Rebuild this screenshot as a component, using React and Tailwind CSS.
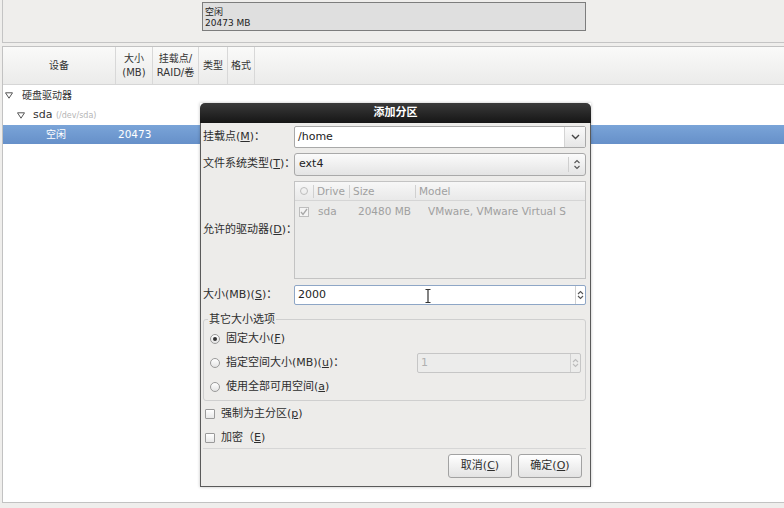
import React from "react";

const font = { fontFamily: '"DejaVu Sans", "Noto Sans CJK SC", sans-serif' };

const U = ({ children }) => <span className="underline underline-offset-1">{children}</span>;

const Tri = () => (
  <svg width="8" height="7" viewBox="0 0 8 7" className="shrink-0">
    <path d="M0.5 0.8 L7.5 0.8 L4 6.2 Z" fill="none" stroke="#555" strokeWidth="1" />
  </svg>
);

const Radio = ({ on }) => (
  <span className="w-[10px] h-[10px] rounded-full border border-[#9a9a9a] bg-gradient-to-b from-white to-[#e4e4e4] flex items-center justify-center shrink-0">
    {on && <span className="w-[4px] h-[4px] rounded-full bg-[#333]" />}
  </span>
);

const Check = () => (
  <span className="w-[10px] h-[10px] border border-[#9a9a9a] bg-gradient-to-b from-white to-[#e8e8e8] rounded-[1px] shrink-0" />
);

const Spin = ({ dim }) => (
  <div className="flex flex-col items-center justify-center w-[10px] border-l border-[#d0d0d0] h-full">
    <svg width="7" height="5" viewBox="0 0 7 5">
      <path d="M1 4 L3.5 1.5 L6 4" fill="none" stroke={dim ? "#bbb" : "#555"} strokeWidth="1.1" />
    </svg>
    <svg width="7" height="5" viewBox="0 0 7 5">
      <path d="M1 1 L3.5 3.5 L6 1" fill="none" stroke={dim ? "#bbb" : "#555"} strokeWidth="1.1" />
    </svg>
  </div>
);

const Label = ({ children }) => (
  <div className="text-[11px] text-[#2e2e2e] pl-[2px] flex items-center whitespace-nowrap">
    <span>{children}</span>
  </div>
);

function Dialog() {
  return (
    <div className="absolute left-[200px] top-[103px] w-[391px] h-[384px] flex flex-col shadow-[0_0_3px_rgba(0,0,0,0.25)]">
      <div className="h-[20px] shrink-0 rounded-t-[5px] bg-gradient-to-b from-[#3a3a3a] to-[#161616] text-white text-[11px] font-bold flex items-center justify-center">
        添加分区
      </div>
      <div className="flex-1 bg-[#edecea] border border-t-0 border-[#5a5a5a] pr-[4px] flex flex-col">
        <div className="grid grid-cols-[93px_1fr] mt-[3px]">
          <Label>
            挂载点(<U>M</U>)：
          </Label>
          <div className="h-[22px] bg-white border border-[#a9a9a9] rounded-[2px] flex items-center">
            <span className="flex-1 pl-[3px] text-[11px] text-[#222]">/home</span>
            <div className="w-[21px] h-full border-l border-[#d4d4d4] bg-gradient-to-b from-[#fafafa] to-[#e6e6e6] flex items-center justify-center">
              <svg width="9" height="6" viewBox="0 0 9 6">
                <path d="M1 1 L4.5 4.5 L8 1" fill="none" stroke="#444" strokeWidth="1.4" />
              </svg>
            </div>
          </div>
        </div>

        <div className="grid grid-cols-[93px_1fr] mt-[5px]">
          <Label>
            文件系统类型(<U>T</U>)：
          </Label>
          <div className="h-[23px] border border-[#a9a9a9] rounded-[3px] bg-gradient-to-b from-[#fbfbfb] to-[#e4e4e4] flex items-center">
            <span className="flex-1 pl-[4px] text-[11px] text-[#222]">ext4</span>
            <div className="w-[17px] h-[15px] border-l border-[#cfcfcf] flex items-center justify-center">
              <svg width="8" height="11" viewBox="0 0 8 11">
                <path d="M1.5 4 L4 1.5 L6.5 4 M1.5 7 L4 9.5 L6.5 7" fill="none" stroke="#555" strokeWidth="1.1" />
              </svg>
            </div>
          </div>
        </div>

        <div className="grid grid-cols-[93px_1fr] mt-[5px]">
          <Label>
            允许的驱动器(<U>D</U>)：
          </Label>
          <div className="h-[98px] border border-[#c3c3c3] bg-[#ebebea] text-[10.5px] text-[#a0a0a0]">
            <div className="h-[19px] flex items-center bg-gradient-to-b from-[#f7f7f7] to-[#e9e9e9] border-b border-[#d5d5d5]">
              <div className="w-[18px] flex justify-center">
                <span className="w-[8px] h-[8px] rounded-full border border-[#bdbdbd]" />
              </div>
              <div className="w-[36px] border-l border-[#d0d0d0] pl-[3px] h-[13px] leading-[13px]">Drive</div>
              <div className="w-[66px] border-l border-[#d0d0d0] pl-[3px] h-[13px] leading-[13px]">Size</div>
              <div className="flex-1 border-l border-[#d0d0d0] pl-[3px] h-[13px] leading-[13px]">Model</div>
            </div>
            <div className="h-[22px] flex items-center">
              <div className="w-[18px] flex justify-center">
                <span className="w-[10px] h-[10px] border border-[#bdbdbd] bg-[#f3f3f3] flex items-center justify-center">
                  <svg width="8" height="8" viewBox="0 0 8 8">
                    <path d="M1 4 L3 6.5 L7 1" fill="none" stroke="#a8a8a8" strokeWidth="1.3" />
                  </svg>
                </span>
              </div>
              <div className="w-[40px] pl-[5px]">sda</div>
              <div className="w-[75px] pl-[5px]">20480 MB</div>
              <div className="flex-1 whitespace-nowrap overflow-hidden">VMware, VMware Virtual S</div>
            </div>
          </div>
        </div>

        <div className="grid grid-cols-[93px_1fr] mt-[6px] relative">
          <Label>
            大小(MB)(<U>S</U>)：
          </Label>
          <div className="h-[20px] bg-white border border-[#8ea6c6] rounded-[2px] flex items-center">
            <span className="flex-1 pl-[3px] text-[11px] text-[#222]">2000</span>
            <Spin />
          </div>
          <svg className="absolute left-[224px] top-[4px]" width="6" height="14" viewBox="0 0 6 14">
            <path d="M0.5 0.5 H5.5 M3 0.5 V13.5 M0.5 13.5 H5.5" stroke="#333" strokeWidth="1.2" fill="none" />
          </svg>
        </div>

        <div className="relative mt-[14px] ml-[2px] h-[82px] border border-[#cfcfcf] rounded-[3px] flex flex-col pt-[12px] pl-[6px] gap-[10px]">
          <span className="absolute -top-[7px] left-[4px] px-[1px] bg-[#edecea] text-[11px] text-[#2e2e2e] leading-[13px]">
            其它大小选项
          </span>
          <div className="h-[14px] flex items-center gap-[6px] text-[11px] text-[#2e2e2e]">
            <Radio on />
            <span>
              固定大小(<U>F</U>)
            </span>
          </div>
          <div className="h-[14px] flex items-center gap-[6px] text-[11px] text-[#2e2e2e]">
            <Radio />
            <span className="flex-1">
              指定空间大小(MB)(<U>u</U>)：
            </span>
            <div className="w-[164px] h-[20px] mr-[4px] border border-[#c6c6c6] rounded-[2px] bg-[#ececeb] flex items-center">
              <span className="flex-1 pl-[3px] text-[#b0b0b0]">1</span>
              <Spin dim />
            </div>
          </div>
          <div className="h-[14px] flex items-center gap-[6px] text-[11px] text-[#2e2e2e]">
            <Radio />
            <span>
              使用全部可用空间(<U>a</U>)
            </span>
          </div>
        </div>

        <div className="mt-[6px] ml-[4px] flex flex-col gap-[10px] text-[11px] text-[#2e2e2e]">
          <div className="h-[14px] flex items-center gap-[6px]">
            <Check />
            <span>
              强制为主分区(<U>p</U>)
            </span>
          </div>
          <div className="h-[14px] flex items-center gap-[6px]">
            <Check />
            <span>
              加密（<U>E</U>)
            </span>
          </div>
        </div>

        <div className="mt-[3px] ml-[2px] border-t border-[#d6d6d6]" />

        <div className="flex justify-end gap-[6px] mt-[5px] pr-[4px]">
          {[
            ["取消(", "C", ")"],
            ["确定(", "O", ")"],
          ].map(([a, b, c]) => (
            <div
              key={b}
              className="w-[64px] h-[24px] border border-[#a2a2a2] rounded-[3px] bg-gradient-to-b from-white to-[#e3e3e3] flex items-center justify-center text-[11px] text-[#2e2e2e]"
            >
              {a}
              <U>{b}</U>
              {c}
            </div>
          ))}
        </div>
      </div>
    </div>
  );
}

export default function App() {
  return (
    <div className="w-[784px] h-[508px] bg-[#efeeec] relative overflow-hidden flex flex-col" style={font}>
      <div className="h-[43px] shrink-0 ml-[2px] border-l border-b border-[#c4c4c4] flex items-start">
        <div className="ml-[199px] mt-[2px] w-[384px] h-[29px] border border-[#7d7d7d] bg-[#dfdfdf] text-[9px] leading-[11px] text-[#222] pl-[2px] pt-[4px]">
          <div>空闲</div>
          <div>20473 MB</div>
        </div>
      </div>

      <div className="mt-[3px] ml-[2px] h-[457px] shrink-0 border border-r-0 border-[#c2c2c2] bg-white flex flex-col">
        <div className="h-[38px] shrink-0 flex bg-gradient-to-b from-[#fafaf9] to-[#ebebea] border-b border-[#d6d6d6] text-[10px] leading-[14px] text-[#333]">
          <div className="w-[113px] flex items-center justify-center border-r border-[#d8d8d8]">设备</div>
          <div className="w-[37px] flex items-center justify-center text-center border-r border-[#d8d8d8]">
            大小
            <br />
            (MB)
          </div>
          <div className="w-[46px] flex items-center justify-center text-center border-r border-[#d8d8d8]">
            挂载点/
            <br />
            RAID/卷
          </div>
          <div className="w-[29px] flex items-center justify-center border-r border-[#d8d8d8]">类型</div>
          <div className="w-[27px] flex items-center justify-center border-r border-[#d8d8d8]">格式</div>
        </div>
        <div className="flex flex-col text-[10px] text-[#333]">
          <div className="h-[20px] flex items-center pl-[2px] gap-[9px] pt-[1px]">
            <Tri />
            <span>硬盘驱动器</span>
          </div>
          <div className="h-[20px] flex items-center pl-[14px] gap-[8px]">
            <Tri />
            <span className="text-[11px]">
              sda <span className="text-[8px] text-[#b5b5b5]">(/dev/sda)</span>
            </span>
          </div>
          <div className="h-[19px] flex items-center bg-gradient-to-b from-[#7aa4d8] to-[#6690c9] text-white">
            <span className="w-[115px] pl-[43px]">空闲</span>
            <span className="text-[10.5px]">20473</span>
          </div>
        </div>
      </div>

      <Dialog />
    </div>
  );
}
